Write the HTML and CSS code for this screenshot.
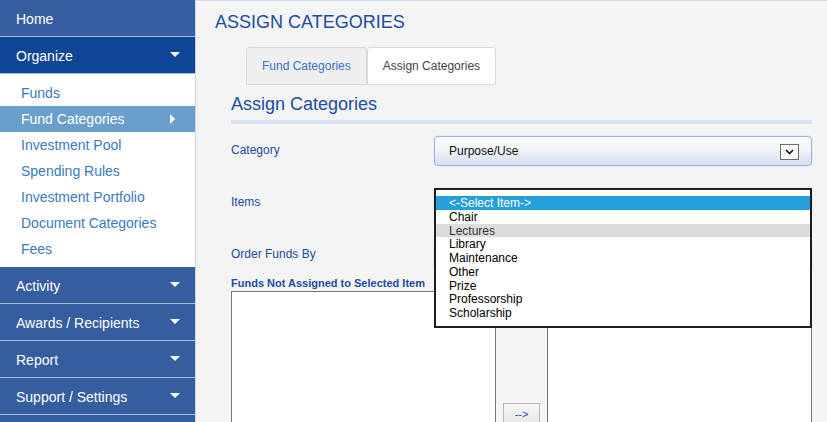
FILE: index.html
```html
<!DOCTYPE html>
<html lang="en">
<head>
<meta charset="utf-8">
<title>Assign Categories</title>
<link rel="stylesheet" href="styles.css">
</head>
<body>
<nav class="sidebar">
  <a class="nav-item">Home</a>
  <a class="nav-item nav-open">Organize<span class="caret-down"></span></a>
  <div class="submenu">
    <a class="sub-item">Funds</a>
    <a class="sub-item sub-active">Fund Categories<span class="caret-right"></span></a>
    <a class="sub-item">Investment Pool</a>
    <a class="sub-item">Spending Rules</a>
    <a class="sub-item">Investment Portfolio</a>
    <a class="sub-item">Document Categories</a>
    <a class="sub-item">Fees</a>
  </div>
  <a class="nav-item">Activity<span class="caret-down"></span></a>
  <a class="nav-item">Awards / Recipients<span class="caret-down"></span></a>
  <a class="nav-item">Report<span class="caret-down"></span></a>
  <a class="nav-item">Support / Settings<span class="caret-down"></span></a>
  <a class="nav-item"></a>
</nav>
<main class="main">
  <h1 class="page-title">ASSIGN CATEGORIES</h1>
  <div class="tabs">
    <a class="tab">Fund Categories</a>
    <a class="tab tab-active">Assign Categories</a>
  </div>
  <section class="panel">
    <h2 class="panel-title">Assign Categories</h2>
    <div class="form-row">
      <label class="form-label">Category</label>
      <div class="control">
        <div class="select">
          <span>Purpose/Use</span>
          <span class="select-arrow"><svg width="17" height="14" viewBox="0 0 17 14"><polyline points="5,5 8.5,8.5 12,5" fill="none" stroke="#111" stroke-width="1.6"/></svg></span>
        </div>
      </div>
    </div>
    <div class="form-row">
      <label class="form-label">Items</label>
      <div class="control">
        <div class="select"></div>
        <div class="dropdown">
          <div class="option option-selected">&lt;-Select Item-&gt;</div>
          <div class="option">Chair</div>
          <div class="option option-hover">Lectures</div>
          <div class="option">Library</div>
          <div class="option">Maintenance</div>
          <div class="option">Other</div>
          <div class="option">Prize</div>
          <div class="option">Professorship</div>
          <div class="option">Scholarship</div>
        </div>
      </div>
    </div>
    <div class="form-row">
      <label class="form-label">Order Funds By</label>
      <div class="control">
        <div class="select"></div>
      </div>
    </div>
    <div class="lists-label">Funds Not Assigned to Selected Item</div>
    <div class="lists">
      <div class="listbox"></div>
      <div class="mover"><button class="move-btn">--&gt;</button></div>
      <div class="listbox"></div>
    </div>
  </section>
</main>
</body>
</html>
```
FILE: styles.css
```css
html, body {
  margin: 0;
  padding: 0;
  height: 100%;
  overflow: hidden;
}
body {
  display: flex;
  font-family: "Liberation Sans", Arial, sans-serif;
  background: #f4f4f4;
}
a { text-decoration: none; cursor: pointer; }

.sidebar {
  width: 195px;
  flex: 0 0 195px;
  border-right: 1px solid #c6d5eb;
  background: #ffffff;
  display: flex;
  flex-direction: column;
}
.nav-item {
  display: flex;
  align-items: center;
  justify-content: space-between;
  height: 34px;
  padding: 2px 15px 0 16px;
  line-height: 34px;
  font-size: 14px;
  color: #ffffff;
  background: #365da0;
  border-bottom: 1px solid #a7bde0;
  flex: 0 0 auto;
}
.nav-open { background: #0f4597; }
.caret-down {
  width: 0;
  height: 0;
  border-left: 5px solid transparent;
  border-right: 5px solid transparent;
  border-top: 5px solid #ffffff;
  margin-top: -4px;
}
.submenu {
  padding: 6px 0 5px;
  background: #ffffff;
}
.sub-item {
  display: flex;
  align-items: center;
  justify-content: space-between;
  height: 26px;
  line-height: 26px;
  padding: 0 20px 0 21px;
  font-size: 14px;
  color: #3a7abe;
}
.sub-active { background: #6a9fcb; color: #ffffff; }
.caret-right {
  width: 0;
  height: 0;
  border-top: 5px solid transparent;
  border-bottom: 5px solid transparent;
  border-left: 5px solid #ffffff;
  margin-top: -1px;
}

.main {
  flex: 1;
  border-top: 1px solid #d3dff0;
  padding: 0 15px 0 0;
  min-width: 0;
}
.page-title {
  margin: 11px 0 0 19px;
  font-size: 18px;
  line-height: 20px;
  font-weight: normal;
  color: #1b4c9f;
}
.tabs {
  display: flex;
  margin: 15px 0 0 50px;
}
.tab {
  height: 36px;
  line-height: 36px;
  padding: 0 15px;
  font-size: 12px;
  white-space: nowrap;
  color: #3a72c4;
  background: #efefef;
  border: 1px solid #dadada;
  border-radius: 3px 3px 0 0;
}
.tab-active {
  background: #ffffff;
  color: #444444;
}

.panel { margin-left: 35px; }
.panel-title {
  margin: 9px 0 0;
  font-size: 18px;
  line-height: 20px;
  font-weight: normal;
  color: #1b4c9f;
  padding-bottom: 6px;
  border-bottom: 4px solid #d7e3f3;
}
.form-row {
  display: flex;
  margin-top: 22px;
  height: 30px;
}
.form-row:first-of-type { margin-top: 12px; }
.form-label {
  width: 203px;
  flex: 0 0 203px;
  padding-top: 6px;
  line-height: 16px;
  font-size: 12px;
  color: #1d4c9d;
}
.control {
  flex: 1;
  position: relative;
}
.select {
  box-sizing: border-box;
  height: 30px;
  display: flex;
  align-items: center;
  justify-content: space-between;
  padding: 0 12px 0 14px;
  border: 1px solid #93b3e0;
  border-radius: 4px;
  background: linear-gradient(#fdfdfe, #f1f4f9 45%, #d4deee);
  font-size: 12px;
  color: #111111;
  box-shadow: 0 0 2px rgba(120, 160, 220, 0.35);
}
.select-arrow {
  display: flex;
  width: 17px;
  height: 14px;
  border: 1px solid #6f6f6f;
  background: #f7f7f7;
  margin-top: 1px;
}
.dropdown {
  position: absolute;
  top: 0;
  left: 0;
  right: 0;
  box-sizing: border-box;
  height: 140px;
  padding-top: 6px;
  border: 2px solid #1e1e1e;
  background: #ffffff;
  z-index: 5;
}
.option {
  height: 13.75px;
  line-height: 14.5px;
  padding-left: 13px;
  font-size: 12px;
  color: #000000;
}
.option-selected { background: #25a0da; color: #ffffff; }
.option-hover { background: #dcdcdc; color: #333333; }

.lists-label {
  margin-top: 7px;
  font-size: 11px;
  line-height: 13px;
  font-weight: bold;
  color: #1d4c9d;
}
.lists {
  display: flex;
  margin-top: 1px;
  height: 170px;
}
.listbox {
  width: 263px;
  flex: 0 0 263px;
  border: 1px solid #777777;
  background: #ffffff;
}
.mover {
  width: 51px;
  flex: 0 0 51px;
  padding: 112px 0 0 7px;
  box-sizing: border-box;
}
.move-btn {
  width: 37px;
  height: 22px;
  padding: 0;
  font-family: "Liberation Sans", Arial, sans-serif;
  font-size: 11px;
  color: #1d4c9d;
  background: linear-gradient(#f8f8f8, #e6e6e6);
  border: 1px solid #b9b9b9;
  border-radius: 0;
}
```
